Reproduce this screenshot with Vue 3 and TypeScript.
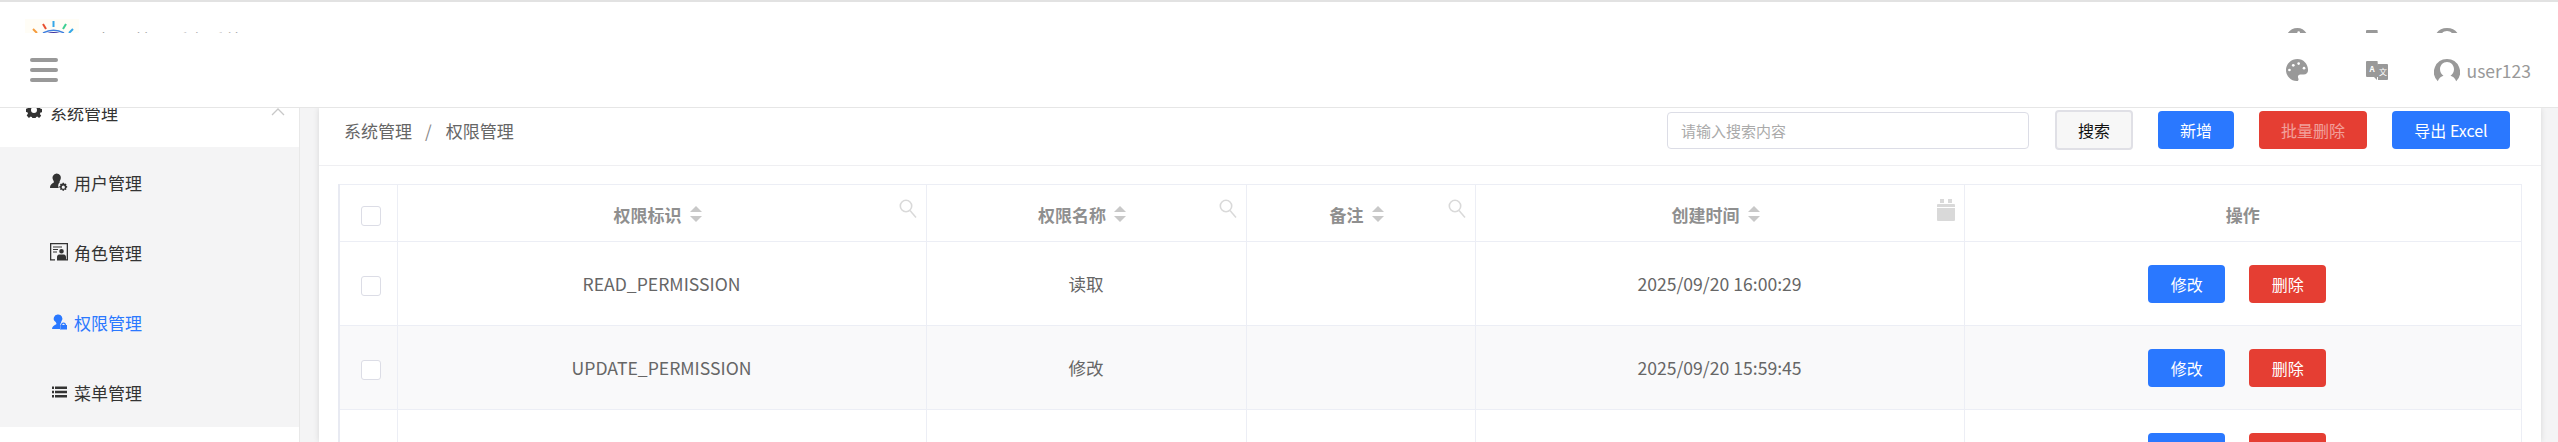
<template>
  <div class="page">
    <!-- 图标定义，顶部条和导航栏共用 -->
    <svg class="defs" width="0" height="0">
      <symbol id="i-palette" viewBox="0 0 24 24">
        <path d="M12 0C5.400 0 0 5 0 11.500S5.400 23 11 23c2 0 2.500-1.500 1.800-3-.7-1.500-.5-3.500 2-3.800h3.500c3 0 4.700-1.700 4.700-4.700C23 5 18 0 12 0z" fill="#999" />
        <circle cx="3.600" cy="11.500" r="1.400" fill="#fff" />
        <circle cx="7.600" cy="6.600" r="1.400" fill="#fff" />
        <circle cx="13.200" cy="4.800" r="1.400" fill="#fff" />
        <circle cx="18.800" cy="9.600" r="1.400" fill="#fff" />
      </symbol>
      <symbol id="i-lang" viewBox="0 0 22 19">
        <path d="M1 0h10.500L13 16H1a1 1 0 0 1-1-1V1a1 1 0 0 1 1-1z" fill="#999" />
        <path d="M8 16l3 3v-3z" fill="#999" />
        <path d="M11.500 3H21a1 1 0 0 1 1 1v14a1 1 0 0 1-1 1h-9z" fill="#999" />
      </symbol>
      <symbol id="i-user" viewBox="0 0 26 23">
        <path fill-rule="evenodd" d="M13 0a13 13 0 0 0-9.200 22.200c1-3 3.400-4.700 5.700-5.400-2.100-1.300-3.500-3.700-3.500-6.500 0-4 3-7.200 7-7.200s7 3.200 7 7.200c0 2.800-1.400 5.200-3.500 6.500 2.300.7 4.700 2.400 5.700 5.400A13 13 0 0 0 13 0z" fill="#999" />
      </symbol>
    </svg>

    <!-- 被导航栏盖住的顶部条 -->
    <div class="top-strip">
      <svg class="logo" width="54" height="31" viewBox="0 0 54 31">
        <rect width="54" height="14" y="17" fill="#fffdf6" />
        <path d="M8 27l4 4" stroke="#f59a3c" stroke-width="2" />
        <path d="M18 22l3 5" stroke="#e8502f" stroke-width="2" />
        <path d="M28.500 19v6" stroke="#35a7e8" stroke-width="2" />
        <path d="M41 22l-3 5" stroke="#3ccf91" stroke-width="2" />
        <path d="M48 27l-4 4" stroke="#35a7e8" stroke-width="2" />
        <path d="M22 31q6.500-2 13 0z" fill="#3a2f9e" />
        <path d="M18 31q10.500-5.500 21 0" stroke="#3f7fe0" stroke-width="1.500" fill="none" />
      </svg>
      <span class="site-name">权限管理后台系统</span>
      <div class="nav-right strip-right">
        <svg class="palette" width="23" height="23"><use href="#i-palette" /></svg>
        <svg class="lang" width="22" height="19" viewBox="0 0 22 19">
          <use href="#i-lang" width="22" height="19" />
          <text x="6" y="10.500" class="lang-a">A</text>
          <text x="17" y="14" class="lang-b">文</text>
        </svg>
        <div class="user">
          <svg width="26" height="23"><use href="#i-user" /></svg>
          <span class="user-name">user123</span>
        </div>
      </div>
    </div>

    <!-- 导航栏 -->
    <header class="navbar">
      <div class="burger"><i></i><i></i><i></i></div>
      <div class="nav-right">
        <svg class="palette" width="23" height="23"><use href="#i-palette" /></svg>
        <svg class="lang" width="22" height="19" viewBox="0 0 22 19">
          <use href="#i-lang" width="22" height="19" />
          <text x="6" y="10.500" class="lang-a">A</text>
          <text x="17" y="14" class="lang-b">文</text>
        </svg>
        <div class="user">
          <svg width="26" height="23"><use href="#i-user" /></svg>
          <span class="user-name">user123</span>
        </div>
      </div>
    </header>

    <div class="body-row">
      <!-- 侧边栏 -->
      <aside class="sidebar">
        <div class="menu-title">
          <svg class="gear" width="16" height="16" viewBox="0 0 16 16">
            <path fill-rule="evenodd" d="M6.500 0h3l.4 2.200 1.300.6 1.900-1.300 2.100 2.100-1.300 1.900.6 1.300 2 .4v3l-2 .4-.6 1.300 1.300 1.900-2.100 2.100-1.900-1.300-1.300.6-.4 2.200h-3l-.4-2.200-1.300-.6-1.900 1.300L.7 13.500 2 11.600l-.6-1.300-2-.4v-3l2-.4.6-1.300L.7 3.600l2.100-2.100 1.900 1.300 1.300-.6zM8 5a3 3 0 1 0 0 6 3 3 0 0 0 0-6z" fill="#333" />
          </svg>
          <span class="menu-label">系统管理</span>
          <svg class="chevron" width="14" height="8" viewBox="0 0 14 8">
            <path d="M1 7l6-6 6 6" fill="none" stroke="#c8c8c8" stroke-width="1.300" />
          </svg>
        </div>
        <div class="submenu">
          <div v-for="item in menuItems" :key="item.name" class="menu-item" :class="{ active: item.active }">
            <svg width="18" height="18" viewBox="0 0 18 18" class="menu-icon">
              <path :d="item.icon" fill-rule="evenodd" />
            </svg>
            <span>{{ item.name }}</span>
          </div>
        </div>
      </aside>

      <main class="content">
        <section class="card">
          <div class="toolbar">
            <div class="crumb">
              <span>系统管理</span>
              <span class="sep">/</span>
              <span>权限管理</span>
            </div>
            <input class="search-input" type="text" placeholder="请输入搜索内容" />
            <button class="btn btn-search">搜索</button>
            <button class="btn btn-blue btn-new">新增</button>
            <button class="btn btn-red btn-batch"><span>批量删除</span></button>
            <button class="btn btn-blue btn-export">导出 Excel</button>
          </div>

          <div class="table-wrap">
            <table class="grid">
              <colgroup>
                <col style="width: 58px" />
                <col style="width: 529px" />
                <col style="width: 320px" />
                <col style="width: 229px" />
                <col style="width: 489px" />
                <col />
              </colgroup>
              <thead>
                <tr>
                  <th><span class="check"></span></th>
                  <th v-for="col in columns" :key="col.title">
                    <span class="th-title">{{ col.title }}</span>
                    <span v-if="col.filter" class="sorter"><i class="up"></i><i class="down"></i></span>
                    <svg v-if="col.filter === 'search'" class="filter" width="18" height="20" viewBox="0 0 18 20">
                      <circle cx="7" cy="7" r="5.700" fill="none" stroke="#d9d9d9" stroke-width="1.600" />
                      <path d="M11 11.500l6 7" stroke="#d9d9d9" stroke-width="1.500" />
                    </svg>
                    <svg v-if="col.filter === 'date'" class="filter" width="18" height="22" viewBox="0 0 18 22">
                      <path d="M3 0h4v4H3zM11 0h4v4h-4zM1 5h16a1 1 0 0 1 1 1v2H0V6a1 1 0 0 1 1-1zM0 9h18v12a1 1 0 0 1-1 1H1a1 1 0 0 1-1-1z" fill="#d9d9d9" />
                    </svg>
                  </th>
                </tr>
              </thead>
              <tbody>
                <tr v-for="(row, i) in rows" :key="i" :class="{ even: i % 2 === 1 }">
                  <td><span class="check"></span></td>
                  <td>{{ row.code }}</td>
                  <td>{{ row.name }}</td>
                  <td></td>
                  <td>{{ row.time }}</td>
                  <td>
                    <button class="btn btn-blue btn-row">修改</button>
                    <button class="btn btn-red btn-row">删除</button>
                  </td>
                </tr>
              </tbody>
            </table>
          </div>
        </section>
      </main>
    </div>
  </div>
</template>

<script setup lang="ts">
interface MenuItem {
  name: string
  icon: string
  active?: boolean
}

const menuItems: MenuItem[] = [
  {
    name: '用户管理',
    icon: 'M6.500.5a4.300 4.300 0 0 1 3.800 6.400c-.6 1.100-.9 1.800-.6 2.600-1.300.9-2.100 3.400-.9 5.500H.5c-.5 0-.5-.5-.5-1 .2-2.200 2.200-3.500 3.800-4.400.3-.9-.1-1.600-.7-2.700A4.300 4.300 0 0 1 6.500.5zM14 9.800l.4 1.200 1.200-.4.9.9-.5 1.200 1.200.5v1.300l-1.200.5.5 1.200-.9.9-1.200-.5-.5 1.200h-1.300l-.5-1.200-1.200.5-.9-.9.5-1.200-1.200-.5v-1.300l1.200-.5-.5-1.200.9-.9 1.200.4.5-1.200zm-.7 2.800a1.600 1.600 0 1 0 0 3.200 1.600 1.600 0 0 0 0-3.200z'
  },
  {
    name: '角色管理',
    icon: 'M0 0h18v17.500h-2v-1.300h.7V1.300H1.300v14.900H5v1.300H0zM3 3.500h9v1H3zM3 6h5v1H3zM3 8.500h4v1H3zM11.500 6a2.300 2.300 0 1 1 0 4.600 2.300 2.300 0 0 1 0-4.600zM7 17.500V14c0-1.500 1-2.500 2.500-2.500h4c1.500 0 2.500 1 2.500 2.500v3.500z'
  },
  {
    name: '权限管理',
    active: true,
    icon: 'M8.300 1.500a4 4 0 0 1 3.500 6c-.5 1-.8 1.500-.7 2.200-.5.500-.8 1-.8 1.500v4.800H2c0-2.500 2.500-4 4.300-4.800.3-.8 0-1.300-.6-2.300A4 4 0 0 1 8.300 1.500zM13.500 9.500a2.500 2.500 0 0 1 2.500 2.500h1v4.500h-7V12h1a2.500 2.500 0 0 1 2.500-2.500zm0 1.200c-.7 0-1.300.6-1.300 1.300h2.600c0-.7-.6-1.300-1.300-1.300z'
  },
  {
    name: '菜单管理',
    icon: 'M2 3.500h2V6H2zM5 3.500h12V6H5zM2 7.700h2v2.500H2zM5 7.700h12v2.500H5zM2 11.900h2v2.500H2zM5 11.900h12v2.500H5z'
  }
]

const columns = [
  { title: '权限标识', filter: 'search' },
  { title: '权限名称', filter: 'search' },
  { title: '备注', filter: 'search' },
  { title: '创建时间', filter: 'date' },
  { title: '操作', filter: '' }
]

const rows = [
  { code: 'READ_PERMISSION', name: '读取', time: '2025/09/20 16:00:29' },
  { code: 'UPDATE_PERMISSION', name: '修改', time: '2025/09/20 15:59:45' },
  { code: 'DELETE_PERMISSION', name: '删除', time: '2025/09/20 15:59:12' }
]
</script>

<style>
html,
body {
  margin: 0;
  overflow: hidden;
  background: #fff;
}
</style>

<style scoped>
.page {
  width: 2558px;
  height: 442px;
  overflow: hidden;
  border-top: 2px solid #e2e2e2;
  box-sizing: border-box;
  font-family: "Noto Sans CJK SC", "Noto Sans", sans-serif;
  color: #333;
}

.defs {
  display: block;
  height: 0;
}

/* 顶部条 */
.top-strip {
  height: 31px;
  overflow: hidden;
  display: flex;
  justify-content: flex-start;
  background: #fff;
  padding: 0 27px 0 25px;
}

.logo {
  flex: none;
}

.site-name {
  margin: 28px 0 0 20px;
  font-size: 18px;
  line-height: 20px;
  color: #888;
}

.strip-right {
  margin-left: auto;
  height: 74px;
}

/* 导航栏 */
.navbar {
  height: 75px;
  display: flex;
  align-items: center;
  justify-content: space-between;
  background: #fff;
  border-bottom: 1px solid #e6e6e6;
  box-sizing: border-box;
  padding: 0 27px 0 30px;
  position: relative;
  z-index: 2;
}

.burger {
  display: flex;
  flex-direction: column;
  gap: 6px;
}

.burger i {
  display: block;
  width: 28px;
  height: 4px;
  border-radius: 2px;
  background: #999;
}

.nav-right {
  display: flex;
  align-items: center;
}

.nav-right svg {
  display: block;
}

.palette {
  margin-right: 57px;
}

.lang {
  margin-right: 46px;
}

.lang-a {
  font-size: 8px;
  font-weight: 700;
  fill: #fff;
  text-anchor: middle;
}

.lang-b {
  font-size: 8px;
  fill: #fff;
  text-anchor: middle;
}

.user {
  display: flex;
  align-items: center;
  gap: 7px;
}

.user-name {
  font-size: 17.5px;
  color: #999;
}

/* 内容区 */
.body-row {
  display: flex;
  height: 334px;
}

.sidebar {
  width: 300px;
  flex: none;
  box-sizing: border-box;
  border-right: 1px solid #e8e8e8;
  background: #fff;
}

.menu-title {
  height: 70px;
  margin-top: -31px;
  display: flex;
  align-items: center;
  gap: 8px;
  padding: 0 14px 0 26px;
  font-size: 17px;
}

.gear {
  margin-top: -4px;
}

.menu-label {
  flex: 1;
}

.submenu {
  background: #f4f4f5;
}

.menu-item {
  height: 70px;
  display: flex;
  align-items: center;
  gap: 6px;
  padding-left: 50px;
  font-size: 17px;
  color: #333;
}

.menu-icon {
  fill: #333;
  flex: none;
}

.menu-item.active {
  color: #2a78ff;
}

.menu-item.active .menu-icon {
  fill: #2a78ff;
}

.content {
  flex: 1;
  background: #f4f4f5;
  padding: 0 17px 0 19px;
  min-width: 0;
}

.card {
  background: #fff;
  height: 100%;
  box-shadow: 0 0 6px rgba(0, 0, 0, 0.12);
}

.toolbar {
  height: 58px;
  box-sizing: border-box;
  border-bottom: 1px solid #efeff2;
  display: flex;
  align-items: center;
  padding: 0 31px 13px 25px;
}

.crumb {
  flex: 1;
  font-size: 17px;
  color: #666;
}

.sep {
  margin: 0 14px 0 13px;
  color: #888;
}

.search-input {
  width: 362px;
  height: 37px;
  box-sizing: border-box;
  border: 1px solid #dcdde6;
  border-radius: 4px;
  padding: 0 13px;
  font-family: inherit;
  font-size: 15px;
  outline: none;
}

.search-input::placeholder {
  color: #aaa;
}

.btn {
  border: none;
  border-radius: 4px;
  font-family: inherit;
  font-size: 16px;
  color: #fff;
  padding: 0;
  height: 38px;
}

.btn-blue {
  background: #2a78ff;
}

.btn-red {
  background: #e53e33;
}

.btn-search {
  width: 78px;
  height: 40px;
  margin-left: 26px;
  background: #f7f7f7;
  color: #111;
  border: 2px solid #e0e0e6;
}

.btn-new {
  width: 76px;
  margin-left: 25px;
}

.btn-batch {
  width: 108px;
  margin-left: 25px;
}

.btn-batch span {
  opacity: 0.5;
}

.btn-export {
  width: 118px;
  margin-left: 25px;
}

.table-wrap {
  padding: 18px 19px 0;
}

.grid {
  width: 2184px;
  table-layout: fixed;
  border-collapse: collapse;
  border-left: 2px solid #e8eaf2;
  font-size: 17.6px;
  color: #666;
}

th,
td {
  border: 1px solid #eceef5;
  text-align: center;
  padding: 0;
  position: relative;
}

th {
  height: 56px;
  font-size: 17px;
  font-weight: 700;
  color: #8f8f8f;
}

td {
  height: 83px;
}

tr.even td {
  background: #f9f9fa;
}

.check {
  display: inline-block;
  width: 20px;
  height: 20px;
  margin-left: 5px;
  box-sizing: border-box;
  border: 1px solid #dcdde6;
  border-radius: 3px;
  background: #fff;
  vertical-align: middle;
}

.th-title {
  vertical-align: middle;
}

.sorter {
  display: inline-block;
  vertical-align: middle;
  margin: 0 8px 0 8px;
}

.sorter i {
  display: block;
  width: 0;
  height: 0;
  border-left: 6px solid transparent;
  border-right: 6px solid transparent;
}

.sorter .up {
  border-bottom: 6px solid #c8c8c8;
  margin-bottom: 4px;
}

.sorter .down {
  border-top: 6px solid #c8c8c8;
}

.filter {
  position: absolute;
  right: 9px;
  top: 14px;
}

.btn-row {
  width: 77px;
}

.btn-row + .btn-row {
  margin: 0 11px 0 24px;
}
</style>
